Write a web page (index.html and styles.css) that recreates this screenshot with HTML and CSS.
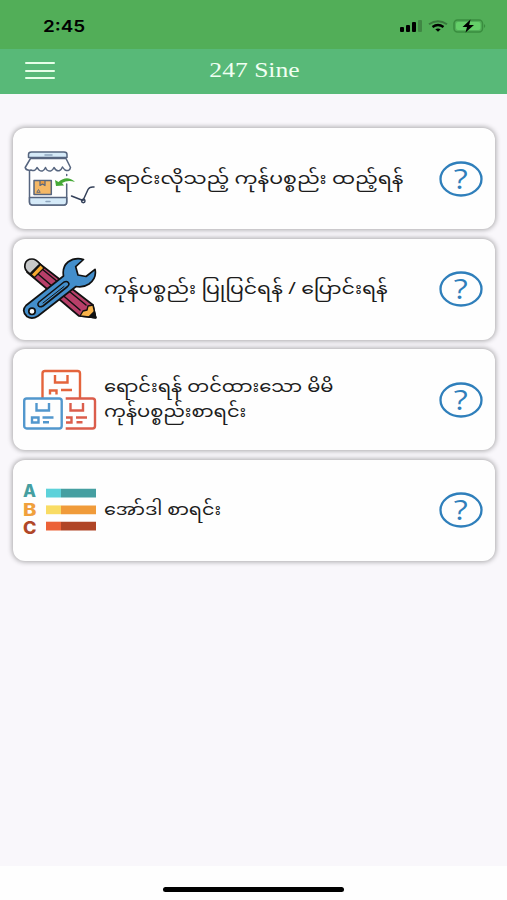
FILE: index.html
```html
<!DOCTYPE html>
<html lang="my">
<head>
  <meta charset="UTF-8" />
  <meta name="viewport" content="width=device-width, initial-scale=1.0" />
  <title>247 Sine</title>
  <link rel="stylesheet" href="styles.css">
</head>
<body>
  <!-- Status bar -->
  <div class="status">
    <span class="time">2:45</span>
    <svg class="status-icons" width="90" height="18" viewBox="0 0 90 18">
      <rect x="3" y="10" width="4" height="5" rx="1" />
      <rect x="9" y="8" width="4" height="7" rx="1" />
      <rect x="15" y="5" width="4" height="10" rx="1" />
      <rect x="21" y="3" width="4" height="12" rx="1" opacity=".22" />
      <path d="M32 7.3Q41 1 50 7.3" fill="none" stroke="#000" stroke-width="2" opacity=".3" />
      <path d="M35.5 10Q41 6 46.500 10" fill="none" stroke="#000" stroke-width="2.3" />
      <path d="M38.300 12.300Q41 10.500 43.700 12.300L41 14.800Z" />
      <rect x="57" y="3" width="28.500" height="12" rx="3.500" fill="none" stroke="#3a8d3f" stroke-width="1.500" />
      <rect x="59" y="5" width="24.500" height="8" rx="2" fill="#65cf69" />
      <path d="M87 7Q89.500 9 87 11Z" fill="#3a8d3f" />
      <path d="M73.500 2.500L65.500 10H70L68.500 15.500L77 8H72.200Z" />
    </svg>
  </div>

  <!-- Header -->
  <header class="header">
    <div class="menu"><i></i><i></i><i></i></div>
    <h1>247 Sine</h1>
  </header>

  <main class="list">
    <!-- Add a product -->
    <div class="card">
      <svg class="icon" viewBox="0 0 76 76" fill="none" stroke="#56657f" stroke-width="1.500" stroke-linecap="round" stroke-linejoin="round">
        <path d="M7.500 28V61Q7.500 64 10.500 64H42Q44.700 64 44.700 61V43M44.700 33.500V34.500" />
        <path d="M7.500 56.500H44.700V61Q44.700 64 42 64H10.500Q7.500 64 7.500 61Z" fill="#d5eaf8" />
        <path d="M6.500 16.500V13.500Q6.500 11 9.500 11H42Q45 11 45 13.500V16.500Z" fill="#d5eaf8" />
        <path d="M8.500 17.500H44L48.500 26.500Q47.500 31 43 29Q41 27 40.500 26Q38 31.500 34 29Q33 28 32 26.500Q29.500 32 25 29Q24 28 23.500 26.500Q21 32 17 29L15 26.500Q13 31 9 29Q4 30 3.200 26.500Z" fill="#fff" />
        <path d="M23 14H30M24 60.500H28" stroke="#8da5bd" />
        <rect x="12" y="39.500" width="17.300" height="14" fill="#f5b866" />
        <path d="M18 40V44.500L20.500 43L23 44.500V40" fill="#e89b42" stroke-width="1.200" />
        <path d="M15 51L16.500 48.500L18 51Z" stroke-width=".9" />
        <path d="M33 39L36.500 41Q45 33.500 53 41Q46 38.500 40 42L42 44.500L34 45Z" fill="#44a936" stroke="none" />
        <path d="M49.500 55L61 59.500L66 48.500Q67.500 45.500 72 46" stroke="#34415a" />
        <circle cx="61.300" cy="60" r="1.700" stroke="#34415a" />
      </svg>
      <p><span class="wide">ရောင်းလိုသည့် ကုန်ပစ္စည်း ထည့်ရန်</span></p>
      <svg class="help" viewBox="0 0 44 36"><ellipse cx="22" cy="18" rx="20.500" ry="16.500" /><text x="0" y="0" transform="translate(21.700 28) scale(1.200 1)">?</text></svg>
    </div>

    <!-- Edit a product -->
    <div class="card">
      <svg class="icon" viewBox="0 0 76 76" stroke="#111" stroke-width="1.700" stroke-linejoin="round" stroke-linecap="round">
        <path d="M14 10L71 54L73.700 66.700L57 65L5 21Z" fill="#b83f69" />
        <path d="M20 18L64 54M16 23L58 59" fill="none" stroke-width="1.500" />
        <path d="M8 23C-1 17 3 8 10 8Q14 8 18 13Z" fill="#c7c9ca" />
        <path d="M18.500 13.500L9 23.500L12.500 26.500L22 17Z" fill="#f8aa31" stroke-width="1.300" />
        <path d="M71 54L66 55L65 59L61 60L58 65L73.700 66.700Z" fill="#f8b34a" stroke-width="1.400" />
        <path d="M72 61L73.700 66.700L67 66Z" fill="#111" />
        <path d="M4 54.500L41.500 25Q40 16 46 11Q53 6 61.500 8.500L53.700 15.700L56 24L64 25.500L73 18.300Q75 27 67 33Q61 37 54 35.500L16 65Q10 69 5 65.500Q-1 60 4 54.500Z" fill="#438ecb" />
        <path d="M17 51L42 31Q46 29.500 47 33Q47 34.500 45 36L21 55Q17 57 16 54Q15.500 52.500 17 51Z" fill="#438ecb" stroke-width="1.600" />
        <path d="M21 52L42 35.500" stroke-width="1" />
        <circle cx="10" cy="60.300" r="3.200" fill="#fff" />
      </svg>
      <p><span class="wide">ကုန်ပစ္စည်း ပြုပြင်ရန် / ပြောင်းရန်</span></p>
      <svg class="help" viewBox="0 0 44 36"><ellipse cx="22" cy="18" rx="20.500" ry="16.500" /><text x="0" y="0" transform="translate(21.700 28) scale(1.200 1)">?</text></svg>
    </div>

    <!-- My products -->
    <div class="card">
      <svg class="icon" viewBox="0 0 76 76" fill="none" stroke-width="2.400">
        <path d="M20.500 36V11.500Q20.500 9 23 9H55.500Q58 9 58 11.500V36M33 13V20.500H45.500V13M28 32.500V28.500H34.500V32.500M39 28H50" stroke="#e4643c" />
        <rect x="2.200" y="36.500" width="37.500" height="30" rx="2.500" stroke="#5297cd" />
        <path d="M14.500 41V48.500H27V41M10 55.500H16.500V60.500H10ZM20.500 55.500H31.500M21 60.300H27" stroke="#5297cd" />
        <path d="M43.700 36.500H70.500Q73 36.500 73 39V64Q73 66.500 70.500 66.500H43.700M48.500 41V48.500H61V41M44 55.500H49.500V60.500H44M54 55.500H65M54.500 60.300H60.500" stroke="#db5d4b" />
      </svg>
      <p><span>ရောင်းရန် တင်ထားသော မိမိ</span><br /><span>ကုန်ပစ္စည်းစာရင်း</span></p>
      <svg class="help" viewBox="0 0 44 36"><ellipse cx="22" cy="18" rx="20.500" ry="16.500" /><text x="0" y="0" transform="translate(21.700 28) scale(1.200 1)">?</text></svg>
    </div>

    <!-- Orders -->
    <div class="card">
      <svg class="icon abc" viewBox="0 0 76 76">
        <text x="1" y="25.300" textLength="13" lengthAdjust="spacingAndGlyphs" fill="#459fa1">A</text>
        <text x="1" y="43.700" textLength="13.500" lengthAdjust="spacingAndGlyphs" fill="#f0a03c">B</text>
        <text x="1" y="62" textLength="13.500" lengthAdjust="spacingAndGlyphs" fill="#b04728">C</text>
        <path d="M24 16.700h15v8.800H24Z" fill="#5dd2da" /><path d="M39 16.700h35v8.800H39Z" fill="#459fa1" />
        <path d="M24 33.400h15v8.800H24Z" fill="#f9dc64" /><path d="M39 33.400h35v8.800H39Z" fill="#f09b3a" />
        <path d="M24 49.700h15v8.800H24Z" fill="#ec6237" /><path d="M39 49.700h35v8.800H39Z" fill="#b04526" />
      </svg>
      <p><span class="narrow">အော်ဒါ စာရင်း</span></p>
      <svg class="help" viewBox="0 0 44 36"><ellipse cx="22" cy="18" rx="20.500" ry="16.500" /><text x="0" y="0" transform="translate(21.700 28) scale(1.200 1)">?</text></svg>
    </div>
  </main>

  <footer class="home"><div></div></footer>
</body>
</html>
```

FILE: styles.css
```css
* {
  box-sizing: border-box;
}

body {
  margin: 0;
  height: 900px;
  display: flex;
  flex-direction: column;
  background-color: #f9f7fb;
  font-family: "Noto Sans Myanmar", "Noto Sans", sans-serif;
  overflow: hidden;
}

.status {
  height: 49px;
  padding: 3px 20px 0 43px;
  display: flex;
  align-items: center;
  justify-content: space-between;
  background-color: #52ae58;
}

.time {
  font: 600 16px Inter, sans-serif;
  transform: scaleX(1.18);
  transform-origin: left;
}

.header {
  height: 45px;
  padding: 0 27px 2px 25px;
  display: grid;
  grid-template-columns: 30px 1fr 26px;
  align-items: center;
  background-color: #58b978;
}

.menu {
  display: grid;
  gap: 5.500px;
}

.menu i {
  height: 2px;
  background-color: #e6ffe8;
  border-radius: 1px;
}

.header h1 {
  margin: 0;
  font: 21.500px "Liberation Serif", serif;
  text-align: center;
  color: #f0fff2;
  transform: scaleX(1.19);
}

.list {
  flex: 1;
  padding: 34px 12px 0 13px;
  display: flex;
  flex-direction: column;
  gap: 9.500px;
}

.card {
  height: 101px;
  padding: 0 12px 0 9px;
  display: flex;
  align-items: center;
  background-color: #fefefe;
  border-radius: 12px;
  box-shadow: 0 0 5px 1px rgba(0, 0, 0, 0.32);
}

.icon {
  width: 76px;
  height: 76px;
}

.abc text {
  font: 800 17px Inter, sans-serif;
}

.card p {
  flex: 1;
  margin: 3px 0 0 6px;
  font-size: 17px;
  line-height: 25px;
  color: #1c1c1c;
  white-space: nowrap;
}

.card p span {
  display: inline-block;
  transform: scaleX(1.145);
  transform-origin: left;
}

.card p .wide {
  transform: scaleX(1.204);
}

.card p .narrow {
  transform: scaleX(1.125);
}

.help {
  width: 44px;
  height: 36px;
  overflow: visible;
  fill: none;
  stroke: #2f7fbb;
  stroke-width: 2.300;
}

.help text {
  font: 27px "Open Sans", sans-serif;
  fill: #2f7fbb;
  stroke: none;
  text-anchor: middle;
}

.home {
  height: 34px;
  display: flex;
  justify-content: center;
  padding-top: 20.500px;
  background-color: #fefefe;
}

.home div {
  width: 181px;
  height: 5.500px;
  border-radius: 3px;
  background-color: #000;
}
```
